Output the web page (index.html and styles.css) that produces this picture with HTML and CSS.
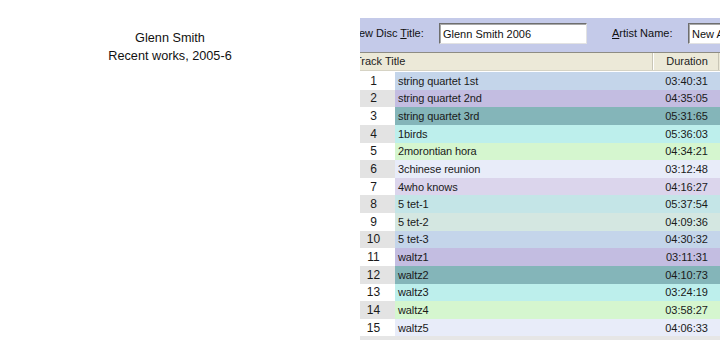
FILE: index.html
```html
<!DOCTYPE html>
<html>
<head>
<meta charset="utf-8">
<link rel="stylesheet" href="styles.css">
</head>
<body>
<div class="page">
  <div class="intro">
    <div class="intro-line">Glenn Smith</div>
    <div class="intro-line">Recent works, 2005-6</div>
  </div>
  <div class="viewport">
    <div class="panel">
      <div class="toolbar">
        <label class="label">New Disc <u>T</u>itle:</label>
        <div class="input input-title">Glenn Smith 2006</div>
        <label class="label label-artist"><u>A</u>rtist Name:</label>
        <div class="input input-artist">New Artist</div>
      </div>
      <div class="header">
        <div class="hcell hcell-title">Track Title</div>
        <div class="hcell hcell-dur">Duration</div>
      </div>
      <div class="rows">
        <div class="row c1"><span class="num">1</span><span class="title">string quartet 1st</span><span class="dur">03:40:31</span></div>
        <div class="row c2"><span class="num">2</span><span class="title">string quartet 2nd</span><span class="dur">04:35:05</span></div>
        <div class="row c3"><span class="num">3</span><span class="title">string quartet 3rd</span><span class="dur">05:31:65</span></div>
        <div class="row c4"><span class="num">4</span><span class="title">1birds</span><span class="dur">05:36:03</span></div>
        <div class="row c5"><span class="num">5</span><span class="title">2morontian hora</span><span class="dur">04:34:21</span></div>
        <div class="row c6"><span class="num">6</span><span class="title">3chinese reunion</span><span class="dur">03:12:48</span></div>
        <div class="row c7"><span class="num">7</span><span class="title">4who knows</span><span class="dur">04:16:27</span></div>
        <div class="row c8"><span class="num">8</span><span class="title">5 tet-1</span><span class="dur">05:37:54</span></div>
        <div class="row c9"><span class="num">9</span><span class="title">5 tet-2</span><span class="dur">04:09:36</span></div>
        <div class="row c1"><span class="num">10</span><span class="title">5 tet-3</span><span class="dur">04:30:32</span></div>
        <div class="row c2"><span class="num">11</span><span class="title">waltz1</span><span class="dur">03:11:31</span></div>
        <div class="row c3"><span class="num">12</span><span class="title">waltz2</span><span class="dur">04:10:73</span></div>
        <div class="row c4"><span class="num">13</span><span class="title">waltz3</span><span class="dur">03:24:19</span></div>
        <div class="row c5"><span class="num">14</span><span class="title">waltz4</span><span class="dur">03:58:27</span></div>
        <div class="row c6"><span class="num">15</span><span class="title">waltz5</span><span class="dur">04:06:33</span></div>
      </div>
      <div class="footer-strip"></div>
    </div>
  </div>
</div>
</body>
</html>
```
FILE: styles.css
```css
html, body {
  margin: 0;
  padding: 0;
  background: #ffffff;
}
body {
  width: 720px;
  height: 360px;
  overflow: hidden;
  font-family: "Liberation Sans", Arial, sans-serif;
  color: #000;
}
.page {
  display: flex;
  width: 720px;
  height: 360px;
}
.intro {
  width: 360px;
  padding-top: 29px;
  box-sizing: border-box;
  display: flex;
  flex-direction: column;
  align-items: center;
  padding-right: 20px;
}
.intro-line {
  font-size: 12.7px;
  line-height: 18px;
  color: #111;
}
.viewport {
  width: 360px;
  height: 360px;
  overflow: hidden;
  padding-top: 18px;
  box-sizing: border-box;
}
.panel {
  margin-left: -8px;
  width: 368px;
  font-size: 11px;
}
.toolbar {
  height: 34px;
  background: #c4cae9;
  display: flex;
  align-items: center;
  box-sizing: border-box;
  padding-bottom: 4px;
  white-space: nowrap;
}
.label {
  color: #111;
  margin-left: -1px;
  width: 88px;
  flex: none;
}
.label u {
  text-decoration: underline;
  text-underline-offset: 1px;
}
.label-artist {
  margin-left: 25px;
  width: 76px;
}
.input {
  flex: none;
  height: 21px;
  box-sizing: border-box;
  background: #fff;
  border: 1px solid;
  border-color: #6e6e6e #e2e2e2 #e2e2e2 #6e6e6e;
  box-shadow: inset 1px 1px 0 #a8a8a8;
  padding: 3px 0 0 3px;
  font-size: 11px;
  line-height: 14px;
  color: #111;
}
.input-title {
  width: 148px;
}
.input-artist {
  width: 80px;
}
.header {
  display: flex;
  height: 19px;
  background: #ece9d8;
  border-top: 1px solid #8e8c84;
  border-bottom: 1px solid #d6d3c4;
  box-sizing: border-box;
  color: #222;
}
.hcell {
  line-height: 17px;
}
.hcell-title {
  width: 301px;
  padding-left: 3px;
  box-sizing: border-box;
  border-right: 1px solid #c9c6b6;
}
.hcell-dur {
  width: 66px;
  text-align: center;
  padding-left: 2px;
  box-sizing: border-box;
  border-left: 1px solid #fff;
  border-right: 1px solid #c9c6b6;
}
.rows {
  padding-top: 1px;
  background: #fff;
}
.row {
  display: flex;
  height: 17.63px;
  align-items: center;
  color: #1a1a1a;
}
.num {
  width: 43px;
  flex: none;
  text-align: center;
  font-size: 12px;
  align-self: stretch;
  display: flex;
  align-items: center;
  justify-content: center;
  background: #fff;
  margin-right: 1px;
}
.row:nth-child(even) .num {
  background: #e3e3e3;
}
.title {
  flex: 1;
  padding-left: 2px;
  letter-spacing: -0.1px;
}
.dur {
  width: 66px;
  flex: none;
  text-align: right;
  padding-right: 10px;
  box-sizing: border-box;
  margin-right: 2px;
}
.c1 { background: #c4d5ea; }
.c2 { background: #c3bde1; }
.c3 { background: #84b5b9; }
.c4 { background: #bdefec; }
.c5 { background: #d5f6cf; }
.c6 { background: #e8ecf9; }
.c7 { background: #dbd5ec; }
.c8 { background: #c4e5e7; }
.c9 { background: #d4e7e1; }
.footer-strip {
  height: 4px;
  background: #e6e6e6;
}
```
